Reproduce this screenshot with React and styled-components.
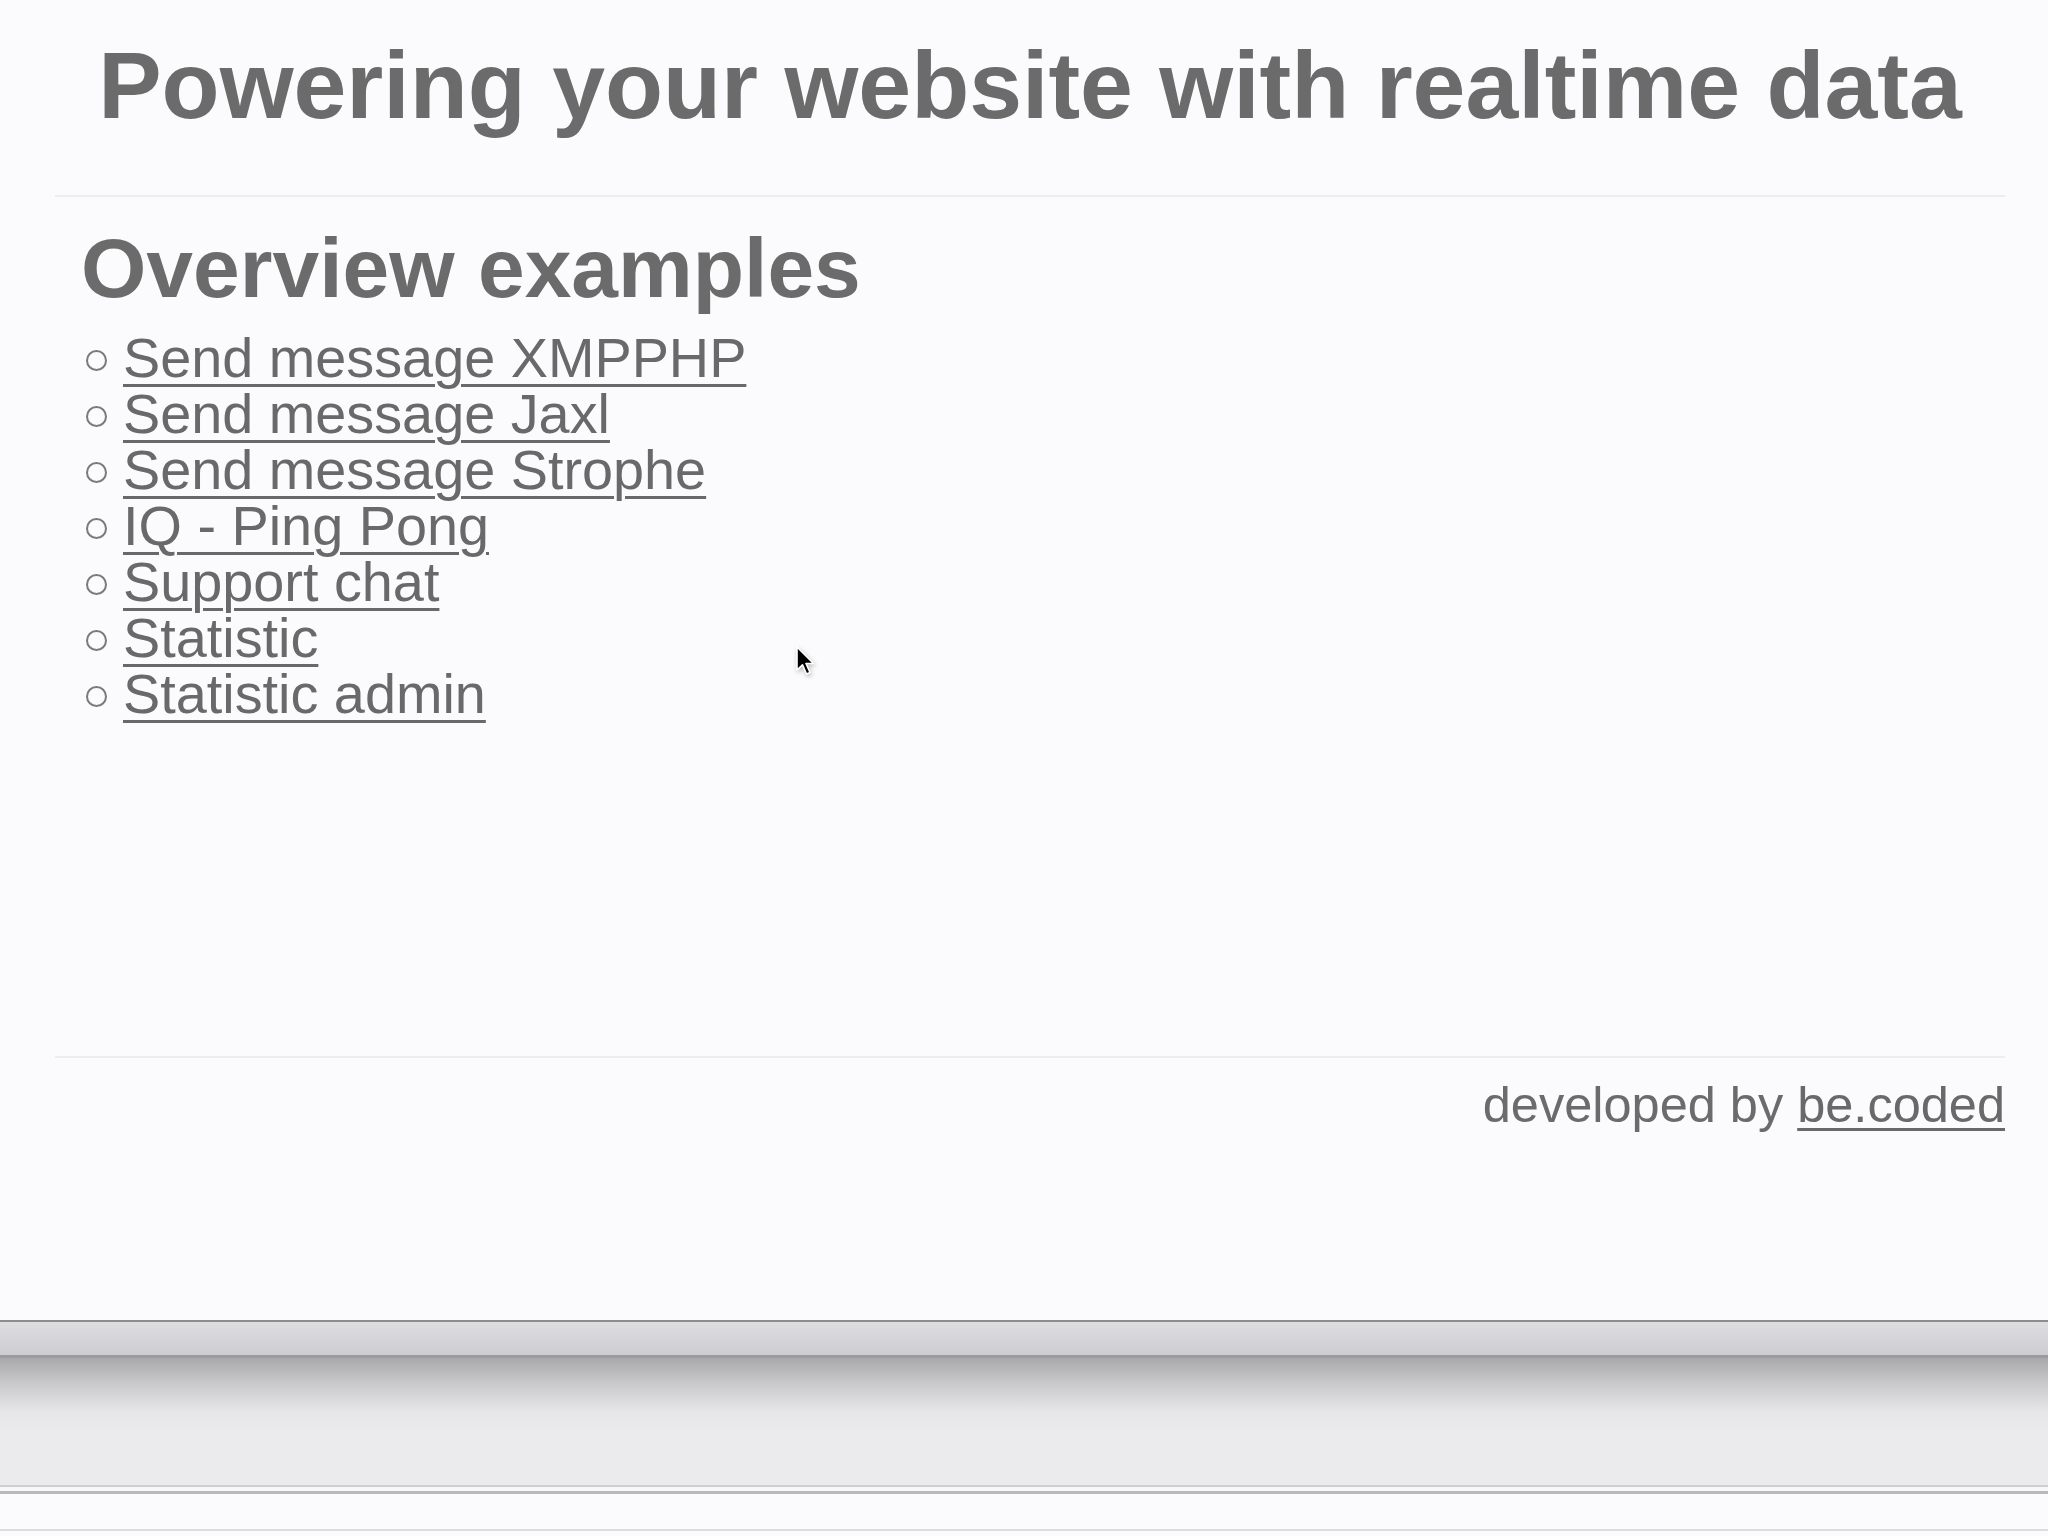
import React from 'react';
import styled, { createGlobalStyle } from 'styled-components';

const GlobalStyle = createGlobalStyle`
  html, body {
    margin: 0;
    padding: 0;
    background: #fbfafc;
  }
  body {
    font-family: "Liberation Sans", Arial, Helvetica, sans-serif;
    color: #6b6b6b;
  }
`;

const Screen = styled.div`
  position: relative;
  width: 2048px;
  height: 1536px;
  display: flex;
  flex-direction: column;
  overflow: hidden;
  background: #fbfafc;
`;

const Page = styled.div`
  height: 1320px;
  box-sizing: border-box;
  padding: 28px 43px 0 55px;
  display: flex;
  flex-direction: column;
`;

const Title = styled.h1`
  margin: 0 0 53px;
  font-size: 95px;
  line-height: 1.2;
  font-weight: 700;
  text-align: center;
  color: #6b6b6b;
`;

const Divider = styled.hr`
  margin: 0;
  border: none;
  height: 2px;
  background: #ededef;
`;

const Main = styled.main`
  height: 859px;
  box-sizing: border-box;
  padding: 21px 0 0 26px;
`;

const SubTitle = styled.h2`
  margin: 0 0 11px;
  font-size: 84px;
  line-height: 1.2;
  font-weight: 700;
  color: #6b6b6b;
`;

const List = styled.ul`
  margin: 0;
  padding: 0 0 0 5px;
  list-style: none;
`;

const Item = styled.li`
  display: flex;
  align-items: baseline;
  font-size: 55.8px;
  line-height: 56px;
`;

const Bullet = styled.span`
  flex: none;
  width: 17px;
  height: 17px;
  border: 2px solid #7a7a7a;
  border-radius: 50%;
  margin-right: 16px;
  transform: translateY(3px);
  align-self: center;
`;

const Link = styled.a`
  color: #696969;
  text-decoration: underline;
  text-decoration-thickness: 3px;
  text-underline-offset: 7px;
  cursor: pointer;
`;

const Footer = styled.footer`
  padding-top: 17px;
  text-align: right;
  font-size: 50.5px;
  line-height: 1.2;
  color: #6b6b6b;
`;

const FooterLink = styled(Link)`
  text-underline-offset: 6px;
`;

const Chrome = styled.div`
  flex: 1;
  display: flex;
  flex-direction: column;
`;

const Band = styled.div`
  height: ${(p) => p.h}px;
  background: ${(p) => p.bg};
`;

const Cursor = styled.svg`
  position: absolute;
  left: 795px;
  top: 646px;
  width: 22px;
  height: 32px;
  filter: drop-shadow(1px 2px 2px rgba(0, 0, 0, 0.25));
`;

const links = [
  'Send message XMPPHP',
  'Send message Jaxl',
  'Send message Strophe',
  'IQ - Ping Pong',
  'Support chat',
  'Statistic',
  'Statistic admin',
];

export default function App() {
  return (
    <Screen>
      <GlobalStyle />
      <Page>
        <Title>Powering your website with realtime data</Title>
        <Divider />
        <Main>
          <SubTitle>Overview examples</SubTitle>
          <List>
            {links.map((l) => (
              <Item key={l}>
                <Bullet />
                <Link>{l}</Link>
              </Item>
            ))}
          </List>
        </Main>
        <Divider />
        <Footer>
          developed by <FooterLink>be.coded</FooterLink>
        </Footer>
      </Page>
      <Chrome>
        <Band h={2} bg="#8d8d8f" />
        <Band h={33} bg="linear-gradient(#dedde0, #cdccd0)" />
        <Band h={3} bg="#9c9b9e" />
        <Band h={127} bg="linear-gradient(#a9a8ab 0%, #c9c8cb 20%, #e6e5e8 42%, #ebeaed 60%, #ebeaed 100%)" />
        <Band h={2} bg="#cfcfd1" />
        <Band h={4} bg="#f7f6f8" />
        <Band h={3} bg="#b9b9bc" />
        <Band h={35} bg="#fbfafc" />
        <Band h={2} bg="#dcdcde" />
        <Band h={5} bg="#fbfafc" />
      </Chrome>
      <Cursor viewBox="0 0 22 32">
        <path
          d="M2 1 L2 24 L7.5 18.8 L11.5 28 L15 26.5 L11 17.5 L18.5 17.5 Z"
          fill="#000"
          stroke="#fff"
          strokeWidth="1.6"
          strokeLinejoin="round"
        />
      </Cursor>
    </Screen>
  );
}
